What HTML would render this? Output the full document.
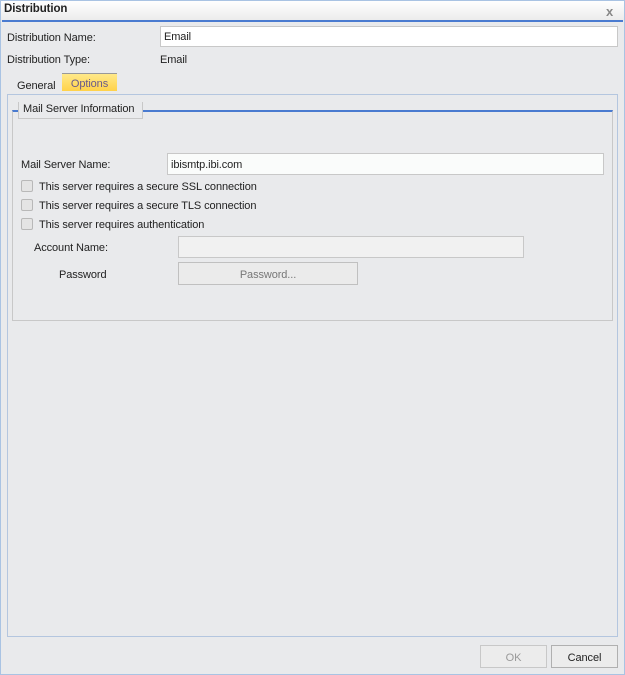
<!DOCTYPE html>
<html><head><style>
*{margin:0;padding:0;box-sizing:border-box}
body{width:625px;height:675px;background:#e9eaec;font-family:"Liberation Sans",sans-serif;font-size:11px;color:#222;position:relative;overflow:hidden;letter-spacing:-0.1px}
.a{position:absolute}
.inp{position:absolute;background:#fff;border:1px solid #c8c8c8;padding-left:3px}
.cb{position:absolute;width:12px;height:12px;border:1px solid #b8b8b8;border-radius:2px;background:#e4e4e4}
</style></head><body>
<div class="a" style="left:0;top:0;width:625px;height:675px;border:1px solid #a9c3e3"></div>
<div class="a" style="left:1px;top:1px;width:623px;height:19px;background:linear-gradient(#fff,#ececec)"></div>
<div class="a" style="left:4px;top:3px;font-weight:bold;font-size:11.5px">Distribution</div>
<div class="a" style="left:606px;top:4px;color:#888;font-size:13px;font-weight:bold">x</div>
<div class="a" style="left:2px;top:20px;width:621px;height:2px;background:#4a7bd0"></div>
<div class="a" style="left:7px;top:32px">Distribution Name:</div>
<div class="inp" style="left:160px;top:26px;width:458px;height:21px;line-height:21px">Email</div>
<div class="a" style="left:7px;top:54px">Distribution Type:</div>
<div class="a" style="left:160px;top:54px">Email</div>
<div class="a" style="left:17px;top:80px">General</div>
<div class="a" style="left:62px;top:73px;width:55px;height:18px;border-top:1px solid #999;background:linear-gradient(#ffe98a,#ffd24a);color:#6a5a8a;text-align:center;line-height:20px">Options</div>
<div class="a" style="left:7px;top:94px;width:611px;height:543px;border:1px solid #b4c6df;background:#e9eaec"></div>
<div class="a" style="left:12px;top:110px;width:601px;height:211px;border:1px solid #c8c8c8;border-top:2px solid #4a7bd0;background:#e9eaec"></div>
<div class="a" style="left:18px;top:102px;width:125px;height:17px;border:1px solid #c8c8c8;border-top:none;background:#e9eaec;padding-left:4px;line-height:15px">Mail Server Information</div>
<div class="a" style="left:21px;top:159px">Mail Server Name:</div>
<div class="inp" style="left:167px;top:153px;width:437px;height:22px;line-height:22px;background:#fafcfb">ibismtp.ibi.com</div>
<div class="cb" style="left:21px;top:180px"></div><div class="a" style="left:39px;top:181px">This server requires a secure SSL connection</div>
<div class="cb" style="left:21px;top:199px"></div><div class="a" style="left:39px;top:200px">This server requires a secure TLS connection</div>
<div class="cb" style="left:21px;top:218px"></div><div class="a" style="left:39px;top:219px">This server requires authentication</div>
<div class="a" style="left:34px;top:242px">Account Name:</div>
<div class="a" style="left:178px;top:236px;width:346px;height:22px;border:1px solid #c8c8c8;background:#f1f1f1"></div>
<div class="a" style="left:59px;top:269px">Password</div>
<div class="a" style="left:178px;top:262px;width:180px;height:23px;border:1px solid #c0c0c0;background:#ebebeb;color:#777;text-align:center;line-height:24px">Password...</div>
<div class="a" style="left:480px;top:645px;width:67px;height:23px;border:1px solid #c8c8c8;background:#ececec;color:#999;text-align:center;line-height:24px">OK</div>
<div class="a" style="left:551px;top:645px;width:67px;height:23px;border:1px solid #b0b0b0;background:#ececec;color:#222;text-align:center;line-height:24px">Cancel</div>
</body></html>
